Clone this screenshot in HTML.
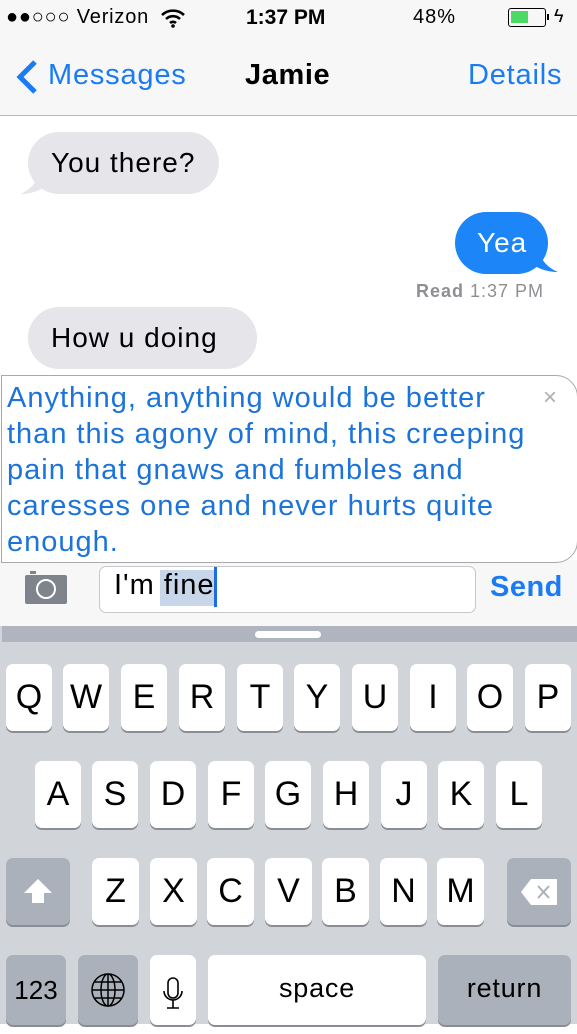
<!DOCTYPE html>
<html><head><meta charset="utf-8"><style>
*{margin:0;padding:0;box-sizing:border-box}
body{width:577px;height:1024px;overflow:hidden;background:#fff;font-family:"Liberation Sans",sans-serif;position:relative}
.a{position:absolute}
.hdr{left:0;top:0;width:577px;height:116px;background:#f7f7f8;border-bottom:1px solid #b8b8bb}
.bub{position:absolute;border-radius:31px;font-size:28px;line-height:62px;padding:0 23px;letter-spacing:1px}
.key{position:absolute;background:#fff;border-radius:7px;box-shadow:0 2px 0 #8a8e94;font-size:34px;text-align:center;color:#000}
.gk{background:#abb1ba}
.r1{top:664px;width:46px;height:67px;line-height:67px}
.r2{top:761px;width:46px;height:67px;line-height:67px}
.r3{top:858px;width:47px;height:67px;line-height:67px}
</style></head><body>
<div class="a hdr"></div>
<div class="a" style="left:6px;top:6px;font-size:20px;color:#000;letter-spacing:0.8px">●●○○○ Verizon</div>
<svg class="a" style="left:160px;top:8px" width="26" height="20" viewBox="0 0 26 20"><path d="M2 7a16 16 0 0 1 22 0M6 11a10 10 0 0 1 14 0M10 15a4.5 4.5 0 0 1 6 0" stroke="#000" stroke-width="2.6" fill="none"/><circle cx="13" cy="18" r="1.8"/></svg>
<div class="a" style="left:246px;top:6px;font-size:21px;font-weight:bold">1:37 PM</div>
<div class="a" style="left:413px;top:6px;font-size:20px;letter-spacing:1px">48%</div>
<div class="a" style="left:508px;top:8px;width:38px;height:19px;border:1.5px solid #000;border-radius:3px"><div style="margin:2px;width:17px;height:12px;background:#4cd964"></div></div>
<div class="a" style="left:547px;top:14px;width:2px;height:6px;background:#000"></div>
<div class="a" style="left:554px;top:6px;font-size:18px">ϟ</div>
<svg class="a" style="left:14px;top:59px" width="26" height="36" viewBox="0 0 26 36"><path d="M21 3L6 18l15 15" stroke="#1a7bf2" stroke-width="5" fill="none"/></svg>
<div class="a" style="left:48px;top:59px;font-size:29px;color:#1a7bf2;letter-spacing:0.8px">Messages</div>
<div class="a" style="left:245px;top:59px;font-size:29px;font-weight:bold;letter-spacing:0.6px">Jamie</div>
<div class="a" style="left:468px;top:59px;font-size:29px;color:#1a7bf2;letter-spacing:0.8px">Details</div>

<svg class="a" style="left:18px;top:170px" width="30" height="26"><path d="M22 0C20 12 12 20 2 24C14 24 24 20 30 14Z" fill="#e5e5ea"/></svg>
<div class="bub" style="left:28px;top:132px;width:191px;background:#e5e5ea">You there?</div>
<svg class="a" style="left:530px;top:248px" width="30" height="26"><path d="M8 0C10 12 18 20 28 24C16 24 6 20 0 14Z" fill="#1c85f7"/></svg>
<div class="bub" style="left:455px;top:212px;width:93px;background:#1c85f7;color:#fff;padding:0 22px">Yea</div>
<div class="a" style="left:416px;top:281px;font-size:18px;color:#8e8e93;letter-spacing:1px"><b>Read</b> 1:37 PM</div>
<div class="bub" style="left:28px;top:307px;width:229px;background:#e5e5ea">How u doing</div>

<div class="a" style="left:0;top:560px;width:577px;height:66px;background:#f7f7f7"></div>
<div class="a" style="left:1px;top:375px;width:577px;height:188px;background:#fff;border:1px solid #a9a9ad;border-radius:0 22px 22px 0"></div>
<div class="a" style="left:7px;top:380px;width:530px;font-size:29px;line-height:36px;color:#1c74d8;letter-spacing:1px">Anything, anything would be better than this agony of mind, this creeping pain that gnaws and fumbles and caresses one and never hurts quite enough.</div>
<div class="a" style="left:543px;top:384px;font-size:24px;color:#b0b0b4">×</div>
<svg class="a" style="left:25px;top:570px" width="42" height="34" viewBox="0 0 42 34"><rect x="0" y="5" width="42" height="29" rx="2" fill="#7f838c"/><rect x="5" y="1" width="6" height="3" fill="#7f838c"/><circle cx="21" cy="19" r="9" fill="none" stroke="#fff" stroke-width="2"/></svg>
<div class="a" style="left:99px;top:566px;width:377px;height:47px;border:1px solid #c8c8cc;border-radius:7px;background:#fff"></div>
<div class="a" style="left:160px;top:570px;width:55px;height:36px;background:#c7d6e8"></div>
<div class="a" style="left:214px;top:567px;width:3px;height:40px;background:#1c6ee0"></div>
<div class="a" style="left:114px;top:569px;font-size:29px;letter-spacing:1px">I'm fine</div>
<div class="a" style="left:490px;top:571px;font-size:29px;font-weight:bold;color:#1a7bf2;letter-spacing:0.5px">Send</div>

<div class="a" style="left:0;top:626px;width:577px;height:398px;background:#d1d4d9"></div>
<div class="a" style="left:2px;top:626px;width:575px;height:16px;background:#afb4be"></div>
<div class="a" style="left:255px;top:631px;width:66px;height:7px;border-radius:4px;background:#fff"></div>

<div class="key r1" style="left:6px">Q</div>
<div class="key r1" style="left:63px">W</div>
<div class="key r1" style="left:121px">E</div>
<div class="key r1" style="left:179px">R</div>
<div class="key r1" style="left:237px">T</div>
<div class="key r1" style="left:294px">Y</div>
<div class="key r1" style="left:352px">U</div>
<div class="key r1" style="left:410px">I</div>
<div class="key r1" style="left:467px">O</div>
<div class="key r1" style="left:525px">P</div>

<div class="key r2" style="left:35px">A</div>
<div class="key r2" style="left:92px">S</div>
<div class="key r2" style="left:150px">D</div>
<div class="key r2" style="left:208px">F</div>
<div class="key r2" style="left:265px">G</div>
<div class="key r2" style="left:323px">H</div>
<div class="key r2" style="left:381px">J</div>
<div class="key r2" style="left:438px">K</div>
<div class="key r2" style="left:496px">L</div>

<div class="key gk" style="left:6px;top:858px;width:64px;height:67px"><svg width="64" height="67"><path d="M32 21L18 35h8v10h12V35h8Z" fill="#fff"/></svg></div>
<div class="key r3" style="left:92px">Z</div>
<div class="key r3" style="left:150px">X</div>
<div class="key r3" style="left:207px">C</div>
<div class="key r3" style="left:265px">V</div>
<div class="key r3" style="left:322px">B</div>
<div class="key r3" style="left:380px">N</div>
<div class="key r3" style="left:437px">M</div>
<div class="key gk" style="left:507px;top:858px;width:64px;height:67px"><svg width="64" height="67"><path d="M14 34l10-13h26v26H24Z" fill="#fff"/><path d="M31 28l11 12M42 28L31 40" stroke="#abb1ba" stroke-width="2"/></svg></div>

<div class="key gk" style="left:6px;top:955px;width:60px;height:70px;line-height:70px;font-size:26px">123</div>
<div class="key gk" style="left:78px;top:955px;width:60px;height:70px"><svg width="60" height="70" viewBox="0 0 60 70"><g fill="none" stroke="#000" stroke-width="1.5"><circle cx="30" cy="35" r="16"/><ellipse cx="30" cy="35" rx="7" ry="16"/><path d="M30 19v32M14 35h32M17 27h26M17 43h26"/></g></svg></div>
<div class="key" style="left:150px;top:955px;width:46px;height:70px"><svg width="46" height="70"><g fill="none" stroke="#000" stroke-width="1.6"><rect x="18" y="23" width="10" height="20" rx="5"/><path d="M14 36a9 9 0 0 0 18 0M23 45v8M17 53h12"/></g></svg></div>
<div class="key" style="left:208px;top:955px;width:218px;height:70px;line-height:66px;font-size:27px;letter-spacing:0.8px">space</div>
<div class="key gk" style="left:438px;top:955px;width:133px;height:70px;line-height:66px;font-size:27px;letter-spacing:0.8px">return</div>
</body></html>
